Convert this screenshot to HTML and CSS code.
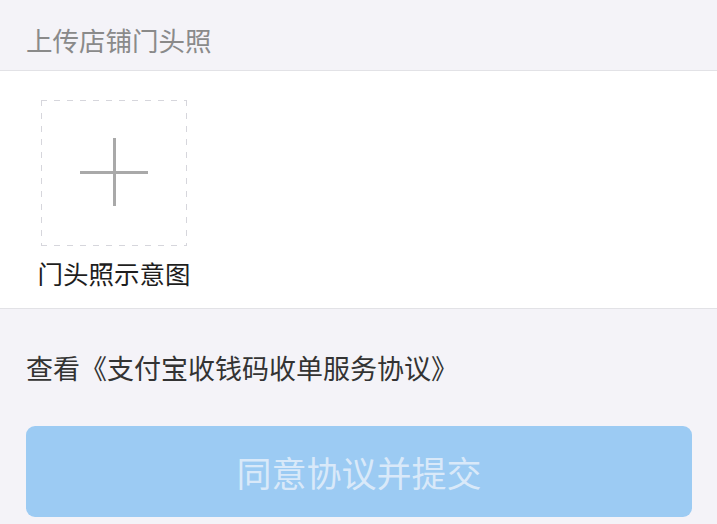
FILE: index.html
```html
<!DOCTYPE html>
<html lang="zh-CN">
<head>
  <meta charset="UTF-8" />
  <meta name="viewport" content="width=device-width, initial-scale=1.0" />
  <title>上传店铺门头照</title>
  <link rel="stylesheet" href="styles.css">
</head>
<body>
  <div class="section-title">上传店铺门头照</div>

  <div class="upload-panel">
    <div class="upload-item">
      <div class="upload-box">
        <span class="plus-h"></span>
        <span class="plus-v"></span>
      </div>
      <div class="upload-label">门头照示意图</div>
    </div>
  </div>

  <div class="agreement">查看《支付宝收钱码收单服务协议》</div>

  <button type="button" class="submit-btn" disabled>同意协议并提交</button>
</body>
</html>
```

FILE: styles.css
```css
body {
  margin: 0;
  background: #f4f3f8;
  font-family: "Noto Sans CJK SC", "Noto Sans", sans-serif;
  color: #333;
}
.section-title {
  box-sizing: border-box;
  height: 71px;
  padding: 10px 26px 0;
  line-height: 60px;
  font-size: 26.5px;
  color: #8a8a8a;
  border-bottom: 1px solid #e2e2e6;
}
.upload-panel {
  background: #fff;
  padding: 29px 0 20px 41px;
  border-bottom: 1px solid #e2e2e6;
}
.upload-item {
  width: 146px;
  display: flex;
  flex-direction: column;
  align-items: center;
}
/* long dashes, drawn with gradients since border dashed is too short */
.upload-box {
  position: relative;
  width: 146px;
  height: 146px;
  background-image:
    repeating-linear-gradient(90deg, #d6d6dc 0 6px, transparent 6px 13px),
    repeating-linear-gradient(90deg, #d6d6dc 0 6px, transparent 6px 13px),
    repeating-linear-gradient(180deg, #d6d6dc 0 6px, transparent 6px 13px),
    repeating-linear-gradient(180deg, #d6d6dc 0 6px, transparent 6px 13px);
  background-size: 100% 1px, 100% 1px, 1px 100%, 1px 100%;
  background-position: 0 0, 0 100%, 0 0, 100% 0;
  background-repeat: no-repeat;
}
.plus-h,
.plus-v {
  position: absolute;
  background: #a9a9a9;
}
.plus-h {
  left: 39px;
  top: 71px;
  width: 68px;
  height: 3px;
}
.plus-v {
  left: 72px;
  top: 38px;
  width: 3px;
  height: 68px;
}
.upload-label {
  margin-top: 12px;
  font-size: 25.5px;
  line-height: 30px;
  color: #1e1e1e;
  white-space: nowrap;
}
.agreement {
  padding: 41px 26px 0;
  font-size: 27px;
  line-height: 36px;
  color: #333;
}
.submit-btn {
  display: block;
  width: 666px;
  height: 91px;
  margin: 40px 0 0 26px;
  border: none;
  border-radius: 9px;
  background: #9ccbf3;
  color: #d9e9f9;
  font-family: inherit;
  font-size: 35px;
}
```
